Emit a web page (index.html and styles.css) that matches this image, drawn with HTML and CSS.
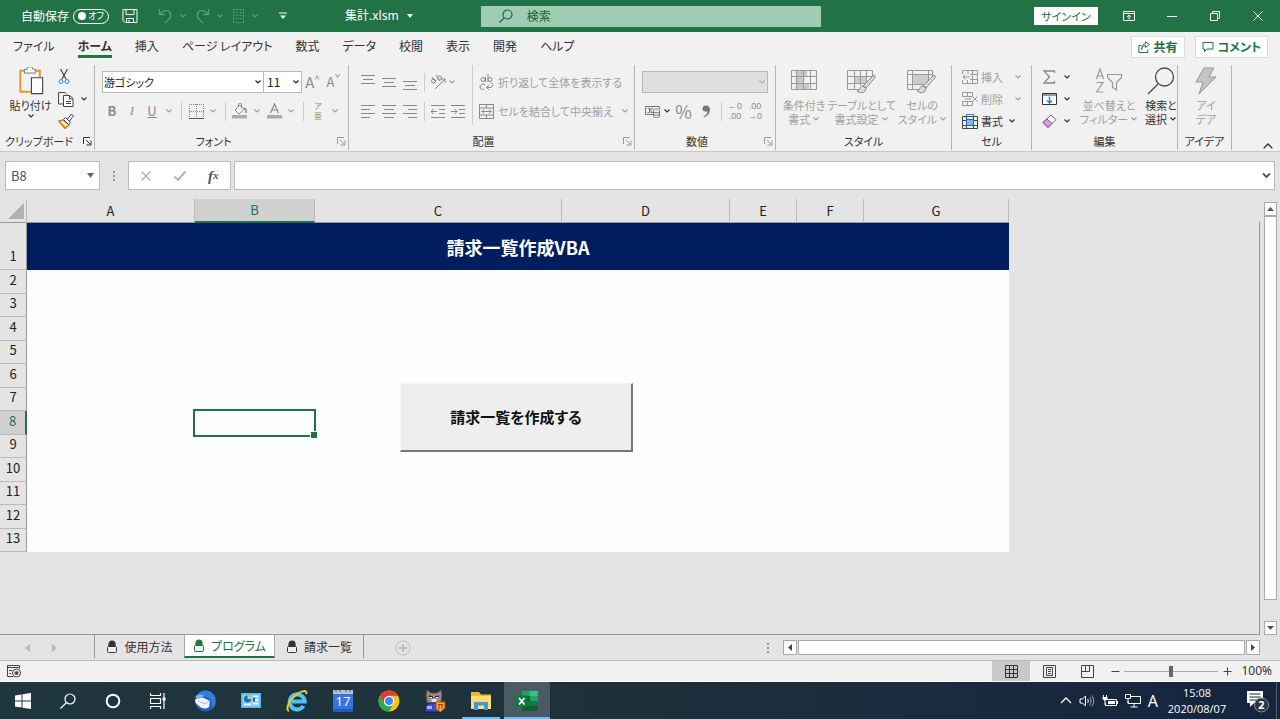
FILE: index.html
```html
<!DOCTYPE html>
<html lang="ja">
<head>
<meta charset="utf-8">
<title>集計.xlsm</title>
<link rel="stylesheet" href="styles.css">
</head>
<body>
<svg class="defs" aria-hidden="true">
  <symbol id="chev" viewBox="0 0 8 8"><path d="M1.500 2.500L4 5L6.500 2.500" fill="none" stroke="currentColor" stroke-width="1.200"/></symbol>
  <symbol id="launch" viewBox="0 0 9 9"><path d="M.5 7V.5H7M3 3l4.500 4.500M8 3.500V8H3.500" fill="none" stroke="currentColor"/></symbol>
  <symbol id="lock" viewBox="0 0 12 14"><path d="M3 7V4a3 3 0 0 1 6 0v3" fill="currentColor" stroke="currentColor" stroke-width="1.200"/><rect x="1.500" y="6.500" width="9" height="6" rx="1" fill="#eee" stroke="currentColor"/></symbol>
</svg>

<header class="titlebar">
  <div class="quick">
    <span>自動保存</span>
    <button class="toggle" aria-label="自動保存 オフ"><i></i><span>オフ</span></button>
    <button aria-label="上書き保存" class="save"><svg width="16" height="16" viewBox="0 0 16 16" fill="none" stroke="#fff"><path d="M1 1.500h14v13H3l-2-2zM4 1.500v5h8v-5M4.500 14.500v-4h7v4M7 12v2"/></svg></button>
    <button aria-label="元に戻す" class="dim"><svg width="15" height="16" viewBox="0 0 15 16" fill="none" stroke="currentColor" stroke-width="1.300"><path d="M1.500 1v5.500H7M2 6C5 2 9 1.500 11.500 4c3 3.500 1 6-4.500 11"/></svg><svg class="c"><use href="#chev"/></svg></button>
    <button aria-label="やり直し" class="dim"><svg width="15" height="16" viewBox="0 0 15 16" fill="none" stroke="currentColor" stroke-width="1.300"><path d="M13.500 1v5.500H8M13 6C10 2 6 1.500 3.500 4c-3 3.500-1 6 4.500 11"/></svg><svg class="c"><use href="#chev"/></svg></button>
    <button aria-label="シート" class="dim"><svg width="13" height="16" viewBox="0 0 13 16" fill="none" stroke="currentColor"><path d="M1.500 1.500h10v13h-10z" stroke-dasharray="2 1"/><path d="M3.500 4.500h2m2 0h2m-6 3h2m2 0h2m-6 3h2m2 0h2"/></svg><svg class="c"><use href="#chev"/></svg></button>
    <button aria-label="カスタマイズ" class="custom"><svg width="8" height="8" viewBox="0 0 8 8"><path d="M0 1h8" stroke="#fff"/><path d="M1 3.500h6L4 7z" fill="#fff"/></svg></button>
  </div>
  <button class="doc">集計.xlsm <svg width="6" height="4" viewBox="0 0 6 4"><path d="M0 0h6L3 4z" fill="#fff"/></svg></button>
  <label class="search"><svg width="14" height="14" viewBox="0 0 14 14" fill="none" stroke="#1b5c37" stroke-width="1.200"><circle cx="8.500" cy="5.500" r="4.500"/><path d="M5.300 8.700L.5 13.500"/></svg><input type="text" placeholder="検索" aria-label="検索"></label>
  <div class="winctl">
    <button class="signin">サインイン</button>
    <button aria-label="リボンの表示オプション"><svg width="12" height="12" viewBox="0 0 12 12" fill="none" stroke="#fff"><path d="M.5 1.500h11v9H.5zM.5 3.500h11M6 9.500V5M4 7l2-2 2 2"/></svg></button>
    <button aria-label="最小化"><svg width="10" height="10" viewBox="0 0 10 10" stroke="#fff"><path d="M0 5.500h10"/></svg></button>
    <button aria-label="元に戻す (縮小)"><svg width="10" height="10" viewBox="0 0 10 10" fill="none" stroke="#fff"><path d="M.5 2.500h7v7h-7zM2.500 2.500v-2h7v7h-2"/></svg></button>
    <button aria-label="閉じる"><svg width="10" height="10" viewBox="0 0 10 10" stroke="#fff"><path d="M.5.5l9 9M9.500.5l-9 9"/></svg></button>
  </div>
</header>

<nav class="tabs">
  <a href="#">ファイル</a><a href="#" class="on">ホーム</a><a href="#">挿入</a><a href="#">ページ レイアウト</a><a href="#">数式</a><a href="#">データ</a><a href="#">校閲</a><a href="#">表示</a><a href="#">開発</a><a href="#">ヘルプ</a>
  <div class="share">
    <button><svg width="12" height="12" viewBox="0 0 12 12" fill="none" stroke="#217346"><path d="M3 4.500H.8v7h9V8.500M3.500 8.500C4 5.500 5.500 4.500 7.500 4.500V6.500L11.300 3.500 7.500.7v2C5 3 3.500 5 3.500 8.500z"/></svg>共有</button>
    <button><svg width="12" height="12" viewBox="0 0 12 12" fill="none" stroke="#217346"><path d="M1 1.500h10v6.500H5l-2.500 2.500V8H1z"/></svg>コメント</button>
  </div>
</nav>

<section class="ribbon">
  <div class="group">
    <div class="body clip">
      <button class="big dark"><svg width="28" height="30" viewBox="0 0 28 30"><path d="M8 4H2.500v22.500H14M19 4h4.500v7" fill="none" stroke="#e8962e" stroke-width="2"/><path d="M7 2.500h3a3 3 0 0 1 6 0h3v4H7z" fill="#f8f8f8" stroke="#777"/><path d="M14.500 11.500h12v17h-12z" fill="#fff" stroke="#444" stroke-width="1.200"/></svg><span>貼り付け</span><svg class="c"><use href="#chev"/></svg></button>
      <div class="stack clipstack">
        <button aria-label="切り取り"><svg width="12" height="16" viewBox="0 0 12 16" fill="none"><path d="M2.500 0L8 10M9.500 0L4 10" stroke="#444" stroke-width="1.200"/><circle cx="3" cy="12.500" r="2" stroke="#2b88d8"/><circle cx="9" cy="12.500" r="2" stroke="#2b88d8"/></svg></button>
        <button aria-label="コピー" class="dark"><svg width="16" height="16" viewBox="0 0 16 16" fill="none" stroke="#444"><path d="M5 13H.5V1.500H7l2 2"/><path d="M5.500 4.500h6l3.500 3v8H5.500zM11.500 4.500v3.500H15M8 10.500h5M8 12.500h5" fill="#fff"/></svg><svg class="c"><use href="#chev"/></svg></button>
        <button aria-label="書式のコピー"><svg width="16" height="16" viewBox="0 0 16 16"><path d="M1 8l4-1 6 5-4 3.500z" fill="#fff3e2" stroke="#e07b16" stroke-width="1.500"/><path d="M3 10l5 4-2 1z" fill="#e07b16"/><path d="M5.500 6.500l2-2 5 5-2 2zM9.500 6l4-5 2 2-4 5" fill="#fff" stroke="#444"/></svg></button>
      </div>
    </div>
    <div class="glabel">クリップボード<svg class="l dark"><use href="#launch"/></svg></div>
  </div>

  <div class="group">
    <div class="body rows">
      <div class="row">
        <label class="combo fontname"><input type="text" value="游ゴシック" aria-label="フォント"><svg class="c"><use href="#chev"/></svg></label><label class="combo fontsize"><input type="text" value="11" aria-label="フォント サイズ"><svg class="c"><use href="#chev"/></svg></label>
        <button class="w21 grow">A<sup>^</sup></button><button class="w21 shrink">A<sup>ˇ</sup></button>
      </div>
      <div class="row">
        <button class="w20"><b>B</b></button><button class="w20 it"><em>I</em></button><button class="w20"><u>U</u></button><svg class="c w14"><use href="#chev"/></svg><i class="sep"></i>
        <button class="w20" aria-label="罫線"><svg width="15" height="15" viewBox="0 0 15 15" fill="none" stroke="#888"><path d="M.5 0v14M7.500 0v14M14.500 0v14M0 .5h15M0 7.500h15" stroke-dasharray="1 1"/><path d="M0 14.500h15" stroke="#555"/></svg></button><svg class="c w14"><use href="#chev"/></svg><i class="sep"></i>
        <button class="w20" aria-label="塗りつぶしの色"><svg width="16" height="16" viewBox="0 0 16 16" fill="none" stroke="#888"><path d="M3 7l5-5 4 4.500-5 4.500zM6.500 4V1.500a1.500 1.500 0 0 1 3 0V5"/><path d="M12 5c2 1 2.500 3 2 5" stroke-width="1.500"/><path d="M0 12h15v3.500H0z" fill="#aaa" stroke="none"/></svg></button><svg class="c w14"><use href="#chev"/></svg>
        <button class="w20" aria-label="フォントの色"><svg width="15" height="16" viewBox="0 0 15 16" fill="none" stroke="#888"><path d="M3.500 10L7.500 1l4 9M5 7h5" stroke-width="1.200"/><path d="M0 12h15v3.500H0z" fill="#aaa" stroke="none"/></svg></button><svg class="c w14"><use href="#chev"/></svg><i class="sep"></i>
        <button class="w20 ruby"><span>ア</span><span>亜</span></button><svg class="c w14"><use href="#chev"/></svg>
      </div>
    </div>
    <div class="glabel">フォント<svg class="l"><use href="#launch"/></svg></div>
  </div>

  <div class="group">
    <div class="body align">
      <div class="rows">
        <div class="row">
          <button class="w21" aria-label="上揃え"><svg class="ln" viewBox="0 0 14 15"><path d="M0 .5h14M2 4.500h10M0 8.500h14"/></svg></button><button class="w21" aria-label="上下中央揃え"><svg class="ln" viewBox="0 0 14 15"><path d="M0 3.500h14M2 7.500h10M0 11.500h14"/></svg></button><button class="w21" aria-label="下揃え"><svg class="ln" viewBox="0 0 14 15"><path d="M0 6.500h14M2 10.500h10M0 14.500h14"/></svg></button><i class="sep s8"></i>
          <button class="w20" aria-label="方向"><svg width="16" height="16" viewBox="0 0 16 16" fill="none" stroke="#888"><path d="M5 15L15 5M11 5h4v4"/><circle cx="3.500" cy="7" r="2"/><path d="M2 3l4 5.500M6 1l4 6"/><circle cx="9.500" cy="4" r="2"/></svg></button><svg class="c"><use href="#chev"/></svg>
        </div>
        <div class="row">
          <button class="w21" aria-label="左揃え"><svg class="ln" viewBox="0 0 14 15"><path d="M0 1.500h14M0 5.500h9M0 9.500h14M0 13.500h9"/></svg></button><button class="w21" aria-label="中央揃え"><svg class="ln" viewBox="0 0 14 15"><path d="M0 1.500h14M2 5.500h10M0 9.500h14M2 13.500h10"/></svg></button><button class="w21" aria-label="右揃え"><svg class="ln" viewBox="0 0 14 15"><path d="M0 1.500h14M5 5.500h9M0 9.500h14M5 13.500h9"/></svg></button><i class="sep s8"></i>
          <button class="w20" aria-label="インデントを減らす"><svg class="ln" viewBox="0 0 14 15"><path d="M0 1.500h14M8 5.500h6M8 9.500h6M0 13.500h14M0 7.500h6M2.500 5L0 7.500 2.500 10"/></svg></button><button class="w20" aria-label="インデントを増やす"><svg class="ln" viewBox="0 0 14 15"><path d="M0 1.500h14M8 5.500h6M8 9.500h6M0 13.500h14M0 7.500h6M3.500 5L6 7.500 3.500 10"/></svg></button>
        </div>
      </div>
      <div class="rows wrapcol">
        <div class="row"><button class="txt"><svg width="15" height="17" viewBox="0 0 15 17" fill="none" stroke="#888"><circle cx="4" cy="5.500" r="2"/><path d="M6.500 3v5M9 0v8M6 10.500c-3-1-5 .5-5 2.500s2 3 4 2M12 8.500c2 1 2.500 5-1 5H7.500M10 11l-2.500 2.500L10 16"/><circle cx="11" cy="5.500" r="2"/></svg><span>折り返して全体を表示する</span></button></div>
        <div class="row"><button class="txt"><svg width="15" height="15" viewBox="0 0 15 15" fill="none" stroke="#888"><path d="M.5.5h14v14H.5zM.5 4h14M.5 11h14M7.500.5V4M7.500 11v3.500M2.500 7.500h10M5 5.500l-2 2 2 2M10 5.500l2 2-2 2"/></svg><span>セルを結合して中央揃え</span></button><svg class="c"><use href="#chev"/></svg></div>
      </div>
    </div>
    <div class="glabel">配置<svg class="l"><use href="#launch"/></svg></div>
  </div>

  <div class="group">
    <div class="body rows">
      <div class="row"><label class="combo off"><input type="text" aria-label="数値の書式" disabled><svg class="c"><use href="#chev"/></svg></label></div>
      <div class="row">
        <button class="w21" aria-label="通貨"><svg width="16" height="13" viewBox="0 0 16 13" fill="none" stroke="#777"><path d="M8 9.500H.5v-8h14V4M2.500 3.500h2v4h-2M8 3.500H6v4h2"/><path d="M8.500 5.500c0-2 6-2 6 0v6c0 1.500-6 1.500-6 0zM8.500 7c1 1 5 1 6 0M8.500 9.500c1 1 5 1 6 0" fill="#eee"/></svg></button><svg class="c dark"><use href="#chev"/></svg>
        <button class="w25 pct">%</button><button class="w21" aria-label="桁区切り"><svg width="9" height="13" viewBox="0 0 9 13"><path d="M4 .5a3 3 0 0 0-1 6c1 .4 2 0 2.500-.3C5.300 8.500 4 10.500 1.500 11.500l.5 1C6 11 8 8 8 4.500 8 2 6.500.5 4 .5z" fill="#777"/></svg></button><i class="sep s8"></i>
        <button class="w20 dec"><span>←0</span><span>.00</span></button><button class="w20 dec"><span>.00</span><span>→0</span></button>
      </div>
    </div>
    <div class="glabel">数値<svg class="l"><use href="#launch"/></svg></div>
  </div>

  <div class="group">
    <div class="body bigs">
      <button class="big"><svg width="26" height="26" viewBox="0 0 26 26" fill="none" stroke="#999"><path d="M5 3h11v5H5zM5 8h7v7H5zM5 15h13v6H5z" fill="#c8c8c8" stroke="none"/><path d="M.5 2.500h25v19H.5zM5.500 2.500v19M12.500 2.500v19M19.500 2.500v19M.5 8.500h25M.5 15.500h25"/></svg><span>条件付き</span><span>書式 <svg class="c"><use href="#chev"/></svg></span></button>
      <button class="big"><svg width="30" height="26" viewBox="0 0 30 26" fill="none" stroke="#999"><path d="M7 8h13v7H7z" fill="#ccc" stroke="none"/><path d="M14 21.500H.5v-19h25v8M7.500 2.500v19M13.500 2.500v15M19.500 2.500v12M.5 8.500h25M.5 15.500h19"/><path d="M27 7L16 18l3 2L28.500 9zM16 18c-4 0-2 4-6 5 3 3 9 2 9-3z" fill="#ddd" stroke="#888"/></svg><span>テーブルとして</span><span>書式設定 <svg class="c"><use href="#chev"/></svg></span></button>
      <button class="big"><svg width="30" height="26" viewBox="0 0 30 26" fill="none" stroke="#999"><path d="M6 6h16v10H6z" fill="#ccc" stroke="none"/><path d="M12 21.500H.5v-19h25v6M5.500 2.500v19M.5 6.500h25M.5 16.500h16M21.500 2.500v10"/><path d="M27 7L16 18l3 2L28.500 9zM16 18c-4 0-2 4-6 5 3 3 9 2 9-3z" fill="#ddd" stroke="#888"/></svg><span>セルの</span><span>スタイル <svg class="c"><use href="#chev"/></svg></span></button>
    </div>
    <div class="glabel">スタイル</div>
  </div>

  <div class="group">
    <div class="body stack cells">
      <button><svg width="16" height="14" viewBox="0 0 16 14" fill="none" stroke="#999"><path d="M6 4V.5H.5V4M.5 10v3.500H15.500V.5H6M10.500.5v13M5.500 10v3.500M8 4.500h7.500M8 9.500h7.500M1 7h7M3.500 4.500L1 7l2.500 2.500"/></svg><span>挿入</span><svg class="c"><use href="#chev"/></svg></button>
      <button><svg width="16" height="14" viewBox="0 0 16 14" fill="none" stroke="#999"><path d="M.5.5h10v4H.5zM.5 9.500h10v4H.5zM5.500.5v4M5.500 9.500v4M3 7h6M10.500 4.500l5 5M15.500 4.500l-5 5"/></svg><span>削除</span><svg class="c"><use href="#chev"/></svg></button>
      <button class="dark fmt"><svg width="16" height="15" viewBox="0 0 16 15" fill="none" stroke="#444"><path d="M.5 2.500h15v12H.5zM4.500 2.500v12M11.500 2.500v12M.5 6.500h15M.5 11.500h15"/><path d="M4.500 5.500h7v6h-7z" fill="#7db9ee" stroke="#1b6db5"/><path d="M4 .5h8M4.500 0v2M11.500 0v2" stroke="#2b88d8"/></svg><span>書式</span><svg class="c"><use href="#chev"/></svg></button>
    </div>
    <div class="glabel">セル</div>
  </div>

  <div class="group">
    <div class="body edit">
      <div class="stack">
        <button class="dark" aria-label="合計"><svg width="15" height="14" viewBox="0 0 15 14" fill="none" stroke="#888" stroke-width="1.300"><path d="M12.500 3V1H2l5.500 6L2 13h10.500v-2"/></svg><svg class="c"><use href="#chev"/></svg></button>
        <button class="dark" aria-label="フィル"><svg width="15" height="14" viewBox="0 0 15 14" fill="none" stroke="#333"><path d="M.5 1.500h14v11H.5zM.5 3h14" fill="#fff"/><path d="M7.500 4.500V11M5 8.500L7.500 11 10 8.500" stroke="#1f86d8" stroke-width="1.500"/></svg><svg class="c"><use href="#chev"/></svg></button>
        <button class="dark" aria-label="クリア"><svg width="15" height="14" viewBox="0 0 15 14" stroke="#a23fae"><path d="M1 8.500L9 1l5 4.500-8 8z" fill="#fff"/><path d="M1 8.500L5 5l5 4.500-4 4z" fill="#d9a0df"/></svg><svg class="c"><use href="#chev"/></svg></button>
      </div>
      <button class="big"><svg width="28" height="28" viewBox="0 0 28 28" fill="none" stroke="#999" stroke-width="1.200"><path d="M1.500 12L5 2l3.500 10M2.500 9h5M1.500 15.500H8L1.500 25H8.500M12.500 7.500h14v3l-5 5V23l-4-2.500v-5l-5-5z"/></svg><span>並べ替えと</span><span>フィルター <svg class="c"><use href="#chev"/></svg></span></button>
      <button class="big dark"><svg width="28" height="28" viewBox="0 0 28 28" fill="none" stroke="#444" stroke-width="1.300"><circle cx="17.500" cy="10" r="9"/><path d="M11 17L1 27"/></svg><span>検索と</span><span>選択 <svg class="c"><use href="#chev"/></svg></span></button>
    </div>
    <div class="glabel">編集</div>
  </div>

  <div class="group">
    <div class="body bigs">
      <button class="big"><svg width="22" height="28" viewBox="0 0 22 28"><path d="M9 1h10l-5 9h7L4 27l4-12H1z" fill="#c4c4c4" stroke="#999"/></svg><span>アイ</span><span>デア</span></button>
    </div>
    <div class="glabel">アイデア</div>
  </div>
  <button class="collapse" aria-label="リボンを折りたたむ"><svg width="10" height="6" viewBox="0 0 10 6" fill="none" stroke="#333" stroke-width="1.300"><path d="M.7 5.300L5 1l4.300 4.300"/></svg></button>
</section>

<section class="formula">
  <label class="namebox"><input type="text" value="B8" aria-label="名前ボックス"><svg width="7" height="5" viewBox="0 0 7 5"><path d="M0 0h7L3.500 5z" fill="#666"/></svg></label>
  <i class="dots"></i>
  <div class="fx">
    <button aria-label="キャンセル"><svg width="12" height="12" viewBox="0 0 12 12" stroke="#b5b5b5" stroke-width="1.500"><path d="M1.500 1.500l9 9M10.500 1.500l-9 9"/></svg></button>
    <button aria-label="入力"><svg width="14" height="12" viewBox="0 0 14 12" fill="none" stroke="#b5b5b5" stroke-width="2"><path d="M1.500 6.500L5 10l7.500-8.500"/></svg></button>
    <button class="f">f<sub>x</sub></button>
  </div>
  <label class="fbar"><input type="text" aria-label="数式バー"><svg width="9" height="7" viewBox="0 0 9 7" fill="none" stroke="#555" stroke-width="1.800"><path d="M1 1.500l3.500 3.500L8 1.500"/></svg></label>
</section>

<main class="work">
  <div class="sheet">
    <table>
      <colgroup><col class="rh"><col class="ca"><col class="cb"><col class="cc"><col class="ca"><col class="ce"><col class="ce"><col class="cg"></colgroup>
      <thead><tr><th class="corner"><svg width="16" height="16" viewBox="0 0 16 16"><path d="M16 0v16H0z" fill="#b2b2b2"/></svg></th><th>A</th><th class="sel">B</th><th>C</th><th>D</th><th>E</th><th>F</th><th>G</th></tr></thead>
      <tbody>
        <tr class="banner"><th>1</th><td colspan="7">請求一覧作成VBA</td></tr>
        <tr><th>2</th><td colspan="7"></td></tr>
        <tr><th>3</th><td colspan="7"></td></tr>
        <tr><th>4</th><td colspan="7"></td></tr>
        <tr><th>5</th><td colspan="7"></td></tr>
        <tr><th>6</th><td colspan="7"></td></tr>
        <tr><th>7</th><td colspan="7"></td></tr>
        <tr><th class="sel">8</th><td></td><td class="active"><i class="cursor"></i></td><td colspan="5"></td></tr>
        <tr><th>9</th><td colspan="7"></td></tr>
        <tr><th>10</th><td colspan="7"></td></tr>
        <tr><th>11</th><td colspan="7"></td></tr>
        <tr><th>12</th><td colspan="7"></td></tr>
        <tr><th>13</th><td colspan="7"></td></tr>
      </tbody>
    </table>
    <button class="macro">請求一覧を作成する</button>
  </div>
  <div class="vscroll">
    <button aria-label="上へ"><svg width="7" height="4" viewBox="0 0 7 4"><path d="M0 4h7L3.500 0z" fill="#555"/></svg></button>
    <div class="thumb"></div>
    <button aria-label="下へ"><svg width="7" height="4" viewBox="0 0 7 4"><path d="M0 0h7L3.500 4z" fill="#555"/></svg></button>
  </div>
</main>

<div class="sheettabs">
  <div class="arrows"><svg width="5" height="8" viewBox="0 0 5 8"><path d="M5 0v8L0 4z" fill="#bbb"/></svg><svg width="5" height="8" viewBox="0 0 5 8"><path d="M0 0v8l5-4z" fill="#bbb"/></svg></div>
  <button class="stab first"><svg width="12" height="14"><use href="#lock"/></svg>使用方法</button>
  <button class="stab cur"><svg width="12" height="14"><use href="#lock"/></svg>プログラム</button>
  <button class="stab last"><svg width="12" height="14"><use href="#lock"/></svg>請求一覧</button>
  <button class="add" aria-label="新しいシート"><svg width="16" height="16" viewBox="0 0 16 16" fill="none" stroke="#bcbcbc"><circle cx="8" cy="8" r="7"/><path d="M4 8h8M8 4v8" stroke-width="2"/></svg></button>
  <i class="dots"></i>
  <div class="hscroll">
    <button aria-label="左へ"><svg width="4" height="7" viewBox="0 0 4 7"><path d="M4 0v7L0 3.500z" fill="#444"/></svg></button>
    <div class="thumb"></div>
    <button aria-label="右へ"><svg width="4" height="7" viewBox="0 0 4 7"><path d="M0 0v7l4-3.500z" fill="#444"/></svg></button>
  </div>
</div>

<footer class="status">
  <button class="rec" aria-label="マクロの記録"><svg width="15" height="13" viewBox="0 0 15 13" fill="none" stroke="#444"><path d="M6 11.500H.5V.5h12v3M.5 2.500h12M2 5.500h3M2 8.500h2"/><circle cx="9.500" cy="8" r="4" fill="#eee"/><circle cx="9.500" cy="8" r="1.500" fill="#444"/></svg></button>
  <button class="view on" aria-label="標準"><svg width="13" height="13" viewBox="0 0 13 13" fill="none" stroke="#333"><path d="M.5.5h12v12H.5zM4.500.5v12M8.500.5v12M.5 4.500h12M.5 8.500h12"/></svg></button>
  <button class="view" aria-label="ページ レイアウト"><svg width="13" height="13" viewBox="0 0 13 13" fill="none" stroke="#444"><path d="M.5.5h12v12H.5zM3.500 2.500h6v8h-6zM5 4.500h3M5 6.500h3M5 8.500h3"/></svg></button>
  <button class="view" aria-label="改ページ プレビュー"><svg width="13" height="13" viewBox="0 0 13 13" fill="none" stroke="#444"><path d="M.5.5h12v12H.5zM4.500.5v6M8.500.5v6M.5 6.500h8"/></svg></button>
  <button class="zoombtn" aria-label="縮小"><svg width="9" height="9" viewBox="0 0 9 9" stroke="#444"><path d="M.5 4.500h8"/></svg></button>
  <input type="range" min="0" max="100" value="50" aria-label="ズーム">
  <button class="zoombtn" aria-label="拡大"><svg width="9" height="9" viewBox="0 0 9 9" stroke="#444"><path d="M.5 4.500h8M4.500.5v8"/></svg></button>
  <span class="pc">100%</span>
</footer>

<div class="taskbar">
  <button class="sys" aria-label="スタート"><svg width="16" height="16" viewBox="0 0 16 16" fill="#fff"><path d="M0 2.500l6.500-1v6H0zM7.500 1.300L16 0v7.500H7.500zM0 8.500h6.500v6l-6.500-1zM7.500 8.500H16V16l-8.500-1.300z"/></svg></button>
  <button class="sys" aria-label="検索"><svg width="16" height="16" viewBox="0 0 16 16" fill="none" stroke="#fff" stroke-width="1.200"><circle cx="10" cy="6" r="5"/><path d="M6.500 9.500L.5 15.500"/></svg></button>
  <button class="sys" aria-label="Cortana"><svg width="16" height="16" viewBox="0 0 16 16" fill="none" stroke="#fff" stroke-width="2"><circle cx="8" cy="8" r="6.300"/></svg></button>
  <button class="sys" aria-label="タスク ビュー"><svg width="16" height="16" viewBox="0 0 16 16" fill="none" stroke="#fff" stroke-width="1.200"><path d="M.5 0v2.500h10V0M.5 5.500h10v5H.5zM.5 16v-2.500h10V16M14 0v16"/><path d="M12.500 4.500h3v3h-3z" fill="#fff" stroke="none"/></svg></button>
  <button class="app" aria-label="Thunderbird"><svg width="24" height="24" viewBox="0 0 24 24"><circle cx="12.500" cy="12" r="10.500" fill="#1f5fc0"/><path d="M3 8C6 1 15-1 20 5c4 5 3 12-1 15 1-5 0-10-5-12C9 6 6 9 3 8z" fill="#2f80dc"/><path d="M2 11c2-3 6-3 9-2l6 3-1 6c-4 3-8 1-10-1-2-2-4-3-4-6z" fill="#f2f4f8"/><path d="M5 12l7 3 5-3" fill="none" stroke="#a8b4c8"/><path d="M2 8c3-3 7-3 9-1L6 10z" fill="#72b6f2"/></svg></button>
  <button class="app" aria-label="コントロール パネル"><svg width="20" height="15" viewBox="0 0 20 15"><path d="M0 0h20v15H0z" fill="#54b8ee"/><path d="M1.500 1.500h17v12h-17z" fill="#8bd2f7"/><circle cx="6.500" cy="6" r="3.500" fill="#1c6fb8"/><path d="M6.500 6V2.500A3.500 3.500 0 0 1 10 6z" fill="#f7c843"/><path d="M3 11.500h7M12 3.500h5M12 7h5M12 10.500h5" stroke="#fff" stroke-width="1.500"/><path d="M12 4.500h2v4h-2z" fill="#1c6fb8"/></svg></button>
  <button class="app" aria-label="Internet Explorer"><svg width="24" height="24" viewBox="0 0 24 24" fill="none"><path d="M18.500 17a7.500 7.500 0 1 1 1.200-4.500H7" stroke="#4cc4f4" stroke-width="4"/><path d="M4 22C0 21 4 11 11 6c6-5 12-5 10-1" stroke="#f5c42c" stroke-width="2"/></svg></button>
  <button class="app" aria-label="カレンダー"><svg width="22" height="24" viewBox="0 0 22 24"><path d="M1 4h20v18.500H1z" fill="#3574e2"/><path d="M1 20h20v3H1z" fill="#2459bb"/><path d="M1 1h20v4H1z" fill="#b9c1cc"/><path d="M4 1v2M8 1v2M14 1v2M18 1v2" stroke="#555"/><text x="11" y="17" text-anchor="middle" class="cal">17</text></svg></button>
  <button class="app" aria-label="Chrome"><svg width="22" height="22" viewBox="0 0 22 22"><circle cx="11" cy="11" r="10.500" fill="#fbc116"/><path d="M11 5.750h9.100a10.500 10.500 0 0 0-18.200 0L6 13z" fill="#e33b2e"/><path d="M1.900 5.750a10.500 10.500 0 0 0 9.100 15.750l4.600-7.900-9.100 0z" fill="#2da94f"/><circle cx="11" cy="11" r="5.200" fill="#fff"/><circle cx="11" cy="11" r="4" fill="#4285f4"/></svg></button>
  <button class="app" aria-label="ネコ"><svg width="22" height="24" viewBox="0 0 22 24"><path d="M2 6l1-5 4 3h6l4-3 1 5-1 7-4 2H6l-3-2z" fill="#9a8e8a" stroke="#564c4a"/><path d="M5 7l4 1.500M15 7l-4 1.500" stroke="#222" stroke-width="1.500"/><path d="M6 8.500h2M12 8.500h2" stroke="#fff"/><path d="M7 10h6l-1 3H8z" fill="#e5dcd6"/><path d="M1 17l4-3h9l4 4v5H1z" fill="#3c4cc8" stroke="#151c52"/><path d="M3 17h5v3H3z" fill="#a6b2f2"/><path d="M12 13h9v6l-4.500 4L12 20z" fill="#f4b31d" stroke="#b8461a"/><path d="M14 15.500h5M15 15.500v5M18 15.500v4" stroke="#c03518" stroke-width="1.200"/></svg></button>
  <button class="app open" aria-label="エクスプローラー"><svg width="22" height="18" viewBox="0 0 22 18"><path d="M1 0h8l2 2.500h10V17H1z" fill="#f3b532"/><path d="M1 4h20v13H1z" fill="#ffdc72"/><path d="M4 18v-8h14v8h-4v-4.500H8V18z" fill="#3f98d8"/></svg></button>
  <button class="app open cur" aria-label="Excel"><svg width="22" height="20" viewBox="0 0 22 20"><path d="M6 0h16v20H6z" fill="#21a366"/><path d="M6 5h8v5H6zM6 15h16v5H6z" fill="#185c37"/><path d="M14 0h8v5h-8z" fill="#33c481"/><path d="M6 10h16v5H6z" fill="#107c41"/><path d="M0 4.500h11.500v11.500H0z" fill="#0f7a40"/><path d="M3 7l5.500 6.500M8.500 7L3 13.500" stroke="#fff" stroke-width="1.800"/></svg></button>
  <div class="tray">
    <svg width="12" height="7" viewBox="0 0 12 7" fill="none" stroke="#fff" stroke-width="1.300"><path d="M1 6l5-5 5 5"/></svg>
    <svg width="16" height="14" viewBox="0 0 16 14" fill="none" stroke="#fff"><path d="M1 5h2.500L6.500 2v10L3.500 9H1zM8.500 5c1 1 1 3 0 4"/><path d="M10.500 3c2 2 2 6 0 8M12.500 1.500c3 3 3 8 0 11" stroke="#aab"/></svg>
    <svg width="16" height="12" viewBox="0 0 16 12" fill="none" stroke="#fff"><path d="M5 4.500h9.500v6h-11V8"/><path d="M6 6h7v3H6zM14.500 6h1.500v3h-1.500z" fill="#fff" stroke="none"/><path d="M1.500 0v2M4.500 0v2M3 5v5"/><path d="M.5 2h5v2L3 6 .5 4z" fill="#fff" stroke="none"/></svg>
    <svg width="16" height="14" viewBox="0 0 16 14" fill="none" stroke="#fff"><path d="M6 2.500h9.500v7H3V7M9 10v3M5.500 13h7M.5.500h5v4h-5zM3 5v4"/></svg>
    <span class="ime">A</span>
  </div>
  <div class="clock"><span>15:08</span><span>2020/08/07</span></div>
  <button class="notify" aria-label="通知"><svg width="24" height="24" viewBox="0 0 24 24"><path d="M1 2h16v12H8l-4 4v-4H1z" fill="#fff"/><path d="M3.500 5h11M3.500 8h11M3.500 11h8" stroke="#17273d"/><circle cx="15.500" cy="16" r="7" fill="#2c3440" stroke="#8b929c"/><text x="15.500" y="20" text-anchor="middle" class="badge">2</text></svg></button>
</div>
</body>
</html>
```
FILE: styles.css
```css
* { box-sizing: border-box; }
body {
  margin: 0; height: 100vh; display: flex; flex-direction: column; overflow: hidden;
  font: 12px/14px "Noto Sans CJK JP", sans-serif; font-feature-settings: "palt";
  background: #e4e4e4; color: #333;
}
button, input {
  font: inherit; font-feature-settings: inherit; color: inherit;
  background: none; border: 0; padding: 0; margin: 0; min-width: 0;
}
button { display: flex; align-items: center; justify-content: center; white-space: nowrap; }
input { outline: 0; width: 100%; }
svg { flex: none; display: block; }
.defs { position: absolute; width: 0; height: 0; }
.c { width: 8px; height: 8px; }

/* title bar */
.titlebar { height: 32px; flex: none; display: flex; align-items: center; background: #217346; color: #fff; }
.quick { display: flex; align-items: center; padding-left: 21px; width: 345px; }
.quick > span { width: 46px; white-space: nowrap; }
.toggle { width: 36px; height: 15px; border: 1px solid #fff; border-radius: 8px; margin-left: 6px; padding: 0 4px; justify-content: space-between; font-size: 9px; }
.toggle i { width: 8px; height: 8px; border-radius: 50%; background: #fff; }
.save { margin: 0 20px 0 13px; }
.dim { color: #5f9c7a; gap: 6px; margin-right: 8px; }
.custom { margin-left: 12px; }
.doc { gap: 8px; font: 12px/16px "Noto Sans", "Noto Sans CJK JP", sans-serif; }
.search { flex: 1; margin-left: 68px; height: 21px; background: #9fcdb3; display: flex; align-items: center; padding-left: 18px; gap: 14px; }
.search input::placeholder { color: #1b5c37; opacity: 1; }
.winctl { display: flex; align-items: center; margin-left: 213px; width: 246px; }
.winctl button { width: 43px; height: 32px; }
.winctl .signin { width: 64px; height: 18px; background: #fff; color: #217346; margin-right: 9px; font-size: 11px; }

/* ribbon tabs */
.tabs { height: 30px; flex: none; display: flex; align-items: center; padding: 0 12px 0 13px; gap: 23px; background: #f1f1f1; }
.tabs a { color: #333; text-decoration: none; line-height: 18px; white-space: nowrap; border-bottom: 3px solid transparent; padding-top: 1px; }
.tabs a.on { font-weight: bold; border-color: #217346; }
.share { margin-left: auto; display: flex; gap: 10px; }
.share button { height: 22px; padding: 0 6px; gap: 4px; background: #fff; border: 1px solid #ddd; color: #217346; font-weight: bold; }

/* ribbon */
.ribbon { height: 90px; flex: none; display: grid; grid-template-columns: 95px 254px 286px 141px 176px 80px 146px 54px 1fr; background: #f1f1f1; border-bottom: 1px solid #c8c8c8; padding: 3px 0; color: #a0a0a0; font-size: 11px; }
.group { display: flex; flex-direction: column; border-right: 1px solid #b4b4b4; min-width: 0; }
.body { flex: 1; display: flex; }
.glabel { height: 18px; line-height: 18px; text-align: center; color: #333; position: relative; padding-right: 16px; white-space: nowrap; }
.glabel:not(:has(svg)) { padding: 0; }
.glabel .l { position: absolute; right: 2px; bottom: 4px; width: 9px; height: 9px; color: #999; }
.dark, .glabel .dark { color: #333; }
.rows { display: flex; flex-direction: column; gap: 7px; padding: 6px 0 0 7px; }
.row { display: flex; align-items: center; height: 22px; }
.row button { color: #8c8c8c; height: 22px; font-size: 13px; }
.row .txt { gap: 4px; color: #a0a0a0; font-size: 11px; }
.row .txt + .c { margin-left: 8px; }
.row .it { font-family: "Liberation Serif", serif; }
.w14 { width: 14px; }
.w20 { width: 20px; }
.w21 { width: 21px; }
.w25 { width: 25px; }
.sep { width: 10px; height: 19px; background: linear-gradient(#ccc, #ccc) center / 1px 100% no-repeat; }
.s8 { width: 8px; }
.combo { display: flex; align-items: center; height: 22px; background: #fff; border: 1px solid #b8b8b8; color: #222; padding: 0 1px; }
.fontname { width: 162px; }
.fontsize { width: 38px; border-left: 0; padding-left: 3px; font-size: 12px; }
.off { width: 126px; background: #e1dfdd; color: #aaa; }
.row .grow, .row .shrink { font-size: 15px; align-items: flex-start; padding-top: 4px; }
.row .shrink { font-size: 13px; }
.row sup { font-size: 10px; line-height: 8px; }
.row .ruby, .row .dec { flex-direction: column; font-size: 8px; line-height: 10px; }
.row .dec { font-family: "Liberation Sans", sans-serif; font-size: 9px; }
.row .pct { font-size: 18px; }
.ln { width: 14px; height: 15px; fill: none; stroke: #888; }
.align .rows { padding-left: 8px; }
.align .wrapcol { padding-left: 6px; border-left: 1px solid #ccc; margin-left: auto; flex: none; width: 162px; height: 60px; }
.big { flex-direction: column; justify-content: flex-start; padding-top: 2px; }
.big > svg:first-child { height: 28px; margin-bottom: 3px; }
.big span { display: flex; align-items: center; gap: 2px; }
.clip { padding-left: 9px; gap: 6px; }
.clip .big { width: 43px; }
.clipstack { width: 30px; }
.stack { display: flex; flex-direction: column; padding-top: 1px; }
.stack button { height: 22px; justify-content: flex-start; gap: 6px; }
.bigs { justify-content: space-around; padding: 0 3px 0 6px; }
.cells { padding-left: 10px; }
.cells button { gap: 3px; }
.cells .c { margin-left: 8px; }
.cells .fmt .c { margin-left: 2px; }
.edit { padding-left: 10px; gap: 7px; }
.edit .stack { padding-right: 2px; }
.collapse { align-self: end; justify-self: end; margin: 0 7px 1px 0; }

/* formula bar */
.formula { flex: none; height: 47px; display: flex; align-items: center; padding: 0 5px; }
.namebox, .fx, .fbar { height: 29px; background: #fff; border: 1px solid #bcbcbc; display: flex; align-items: center; }
.namebox { width: 95px; padding: 0 5px; font-size: 13px; color: #555; }
.formula .dots { margin: 0 13px; }
.dots { width: 2px; height: 10px; background: repeating-linear-gradient(#999 0 2px, transparent 2px 4px); }
.fx { width: 103px; }
.fx button { width: 34px; height: 27px; }
.fx .f { font: italic bold 15px/18px "Liberation Serif", serif; color: #555; }
.f sub { font-size: 11px; line-height: 11px; }
.fbar { flex: 1; margin-left: 3px; padding-right: 3px; }

/* worksheet */
.work { flex: 1; min-height: 0; display: flex; }
.sheet { flex: 1; position: relative; border-bottom: 1px solid #999; background: linear-gradient(#999, #999) right 23px / 1px 100% no-repeat; }
.sheet table { border-collapse: separate; border-spacing: 0; table-layout: fixed; width: 1009px; background: #fdfdfd; }
.rh { width: 27px; }
.ca { width: 168px; }
.cb { width: 120px; }
.cc { width: 247px; }
.ce { width: 67px; }
.cg { width: 145px; }
.sheet th, .sheet td { padding: 0; }
.sheet th { background: #e4e4e4; font-weight: normal; font-size: 13px; line-height: 16px; color: #222; }
thead th { height: 24px; border-right: 1px solid #bbb; border-bottom: 1px solid #999; }
thead th.sel { background: #d0d0d0; color: #217346; border-bottom: 2px solid #217346; }
.corner svg { margin-left: 8px; }
.sheet tbody th { height: 24px; border-right: 1px solid #999; border-bottom: 1px solid #bbb; vertical-align: bottom; padding-bottom: 5px; }
.sheet tbody tr:nth-child(odd) th { height: 23px; }
.sheet tbody th.sel { background: #d0d0d0; color: #217346; border-right: 2px solid #217346; }
.sheet tbody tr.banner th { height: 47px; }
.banner td { background: #001d5d; color: #fff; font-size: 18px; font-weight: bold; text-align: center; }
.active { position: relative; }
.cursor { position: absolute; inset: -2px -1px -2px -2px; border: 2px solid #217346; }
.cursor::after { content: ""; position: absolute; right: -3px; bottom: -3px; width: 6px; height: 6px; background: #217346; border: 1px solid #fff; border-width: 1px 0 0 1px; }
.macro { position: absolute; left: 400px; top: 184px; width: 233px; height: 69px; background: #eee; border: 1px solid #f6f6f6; border-right: 2px solid #777; border-bottom: 2px solid #777; font-size: 15px; font-weight: bold; color: #111; }
.vscroll { width: 20px; padding: 3px 3px 0 4px; display: flex; flex-direction: column; }
.vscroll button { height: 14px; background: #fff; border: 1px solid #aaa; }
.vscroll .thumb { flex: 1; background: #fff; border: 1px solid #aaa; margin-bottom: 21px; }

/* sheet tabs */
.sheettabs { height: 26px; flex: none; display: flex; align-items: center; border-bottom: 1px solid #bbb; padding-right: 20px; }
.arrows { width: 94px; display: flex; gap: 22px; padding-left: 25px; }
.stab { height: 23px; align-self: flex-start; gap: 6px; width: 91px; }
.first { border-left: 1px solid #999; width: 90px; }
.cur.stab { background: #fff; color: #217346; border-bottom: 2px solid #217346; border-right: 1px solid #aaa; border-left: 1px solid #aaa; }
.last { border-right: 1px solid #999; width: 89px; }
.add { margin-left: 31px; }
.sheettabs .dots { margin-left: auto; margin-right: 14px; }
.hscroll { width: 38%; max-width: 477px; height: 15px; display: flex; gap: 1px; }
.hscroll button { width: 14px; background: #fff; border: 1px solid #aaa; }
.hscroll .thumb { flex: 1; background: #fff; border: 1px solid #aaa; }

/* status bar */
.status { height: 21px; flex: none; display: flex; align-items: center; background: #f1f1f1; padding: 0 8px 0 7px; border-bottom: 1px solid #fff; }
.rec { margin-right: auto; }
.view { width: 38px; height: 20px; }
.view.on { background: #c8c8c8; }
.zoombtn { width: 18px; }
.status input { appearance: none; width: 94px; height: 12px; background: linear-gradient(#aaa, #aaa) center / 100% 1px no-repeat; }
.status input::-webkit-slider-thumb { appearance: none; width: 4px; height: 11px; background: #666; }
.pc { font: 12px/16px "Noto Sans", sans-serif; width: 36px; text-align: right; }

/* task bar */
.taskbar { height: 37px; flex: none; display: flex; align-items: stretch; background: linear-gradient(90deg, #20363d, #1d313c 50%, #15243f); color: #fff; }
.sys { width: 45px; }
.app { width: 46px; border-bottom: 2px solid transparent; padding-top: 2px; }
.sys + .app { margin-left: 2px; }
.open { background: linear-gradient(#76b9ed, #76b9ed) center bottom / 38px 2px no-repeat border-box; }
.app.cur { background: #4b5b64; border-color: #76b9ed; }
.cal { font: 13px "Noto Sans", sans-serif; fill: #fff; }
.tray { margin-left: auto; display: flex; align-items: center; gap: 7px; }
.ime { font: 16px/20px "Noto Sans", sans-serif; }
.clock { width: 78px; display: flex; flex-direction: column; justify-content: center; text-align: center; font: 11px/16px "Open Sans", sans-serif; }
.notify { width: 41px; border-right: 1px solid #56616f; margin-right: 3px; padding-left: 4px; }
.badge { font: bold 11px "Noto Sans", sans-serif; fill: #fff; }
```
